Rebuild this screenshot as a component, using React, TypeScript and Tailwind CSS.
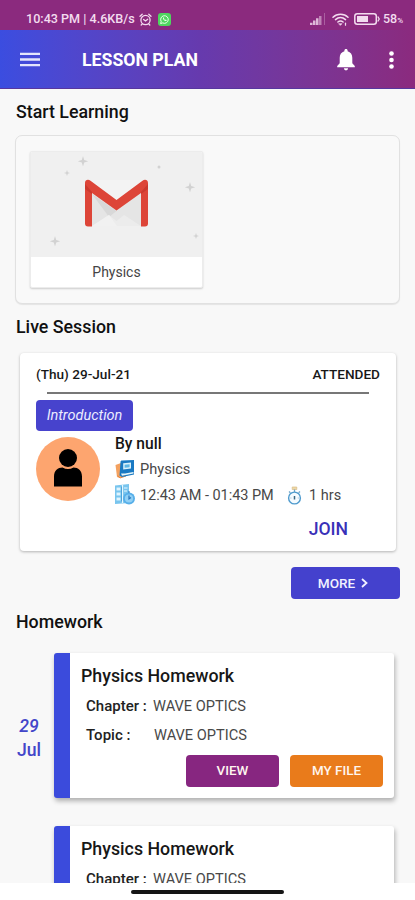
import type { ReactNode } from "react";

type HomeworkItem = {
  title: string;
  chapter: string;
  topic: string;
  // only the first item of a day carries the date label
  day?: string;
  month?: string;
};

const homework: HomeworkItem[] = [
  { title: "Physics Homework", chapter: "WAVE OPTICS", topic: "WAVE OPTICS", day: "29", month: "Jul" },
  { title: "Physics Homework", chapter: "WAVE OPTICS", topic: "WAVE OPTICS" },
];

function StatusBar() {
  return (
    <div className="flex h-[30px] shrink-0 items-center justify-between bg-[#8b2a7e] pt-[8px] pr-[11px] pl-[26px] text-[#f3dcef]">
      <div className="flex items-center">
        <span className="w-[110px] text-[12.6px] leading-none font-medium whitespace-nowrap">10:43 PM | 4.6KB/s</span>
        <svg className="ml-[3px] h-[13px] w-[13px]" viewBox="0 0 13 13" fill="none" stroke="currentColor" strokeWidth="1.3" strokeLinecap="round">
          <circle cx="6.5" cy="7" r="4.6" />
          <path d="M1 3.2 3.2 1.2M12 3.2 9.8 1.2M4.6 6.4l1.9 1.6 2.2-1.8M3.2 11l-1 1M9.8 11l1 1" />
        </svg>
        <svg className="ml-[6px] h-[13px] w-[13px]" viewBox="0 0 13 13">
          <rect width="13" height="13" rx="3" fill="#4fd660" />
          <path d="m2.6 10.6.6-2.1a3.8 3.8 0 1 1 1.5 1.4z" fill="none" stroke="#e9ffe9" strokeWidth="1" />
          <path d="M5 4.7c-.4 1.4 1.7 3.6 3.2 3.4l.6-.9-1.2-.7-.6.5-1.1-1.2.4-.6-.6-1z" fill="#e9ffe9" />
        </svg>
      </div>
      <div className="flex items-center">
        <svg className="h-[12px] w-[16px]" viewBox="0 0 16 12" fill="currentColor">
          <path d="M0 9.800h2.500V12H0zM3 7.500h2.500V12H3zM6 5.200h2.500V12H6z" opacity=".8" />
          <path d="M9 3h2.500v9H9z" opacity=".5" />
          <path d="M14 0h1v12h-1z" opacity=".3" />
        </svg>
        <svg className="ml-[6px] h-[13px] w-[17px]" viewBox="0 0 17 13" fill="none" stroke="currentColor" strokeWidth="1.500" strokeLinecap="round">
          <path d="M1 4.200c4-4 11-4 15 0M3.500 6.600c3-2.700 7-2.700 10 0M5.900 9c1.700-1.400 3.500-1.400 5.200 0" />
          <path d="M7 10.700h3l-1.500 1.500z" fill="currentColor" strokeWidth=".6" />
          <path d="M13.500 10.200v2" strokeWidth="1.200" />
        </svg>
        <svg className="ml-[5px] h-[12px] w-[26px]" viewBox="0 0 26 12" fill="none">
          <rect x=".8" y=".8" width="21.500" height="10.400" rx="2.500" stroke="currentColor" strokeWidth="1.500" />
          <rect x="3" y="3" width="11" height="6" fill="currentColor" />
          <path d="M23.800 3.500 25.200 6l-1.400 2.500" stroke="currentColor" strokeWidth="1.300" />
        </svg>
        <span className="ml-[3px] w-[21px] text-[12.5px] leading-none font-medium whitespace-nowrap">
          58<span className="text-[8px]">%</span>
        </span>
      </div>
    </div>
  );
}

function Header() {
  return (
    <header className="flex h-[59px] shrink-0 items-center bg-linear-to-r from-[#3b4de0] via-[#663aae] via-48% to-[#8b2a7e] text-white shadow-[inset_0_-1px_0_#57379e]">
      <svg className="ml-5 h-4 w-5 text-[#e4e5fc]" viewBox="0 0 20 16" fill="currentColor">
        <path d="M0 .7h20v2.400H0zM0 6.300h20v2.400H0zM0 11.900h20v2.400H0z" />
      </svg>
      <h1 className="ml-[42px] grow pt-[2px] text-[17.7px] leading-none font-bold">LESSON PLAN</h1>
      <svg className="h-[22px] w-[18px]" viewBox="0 0 18 22" fill="currentColor">
        <path d="M9 0c1 0 1.600.7 1.600 1.600v.7c3 .8 4.700 3.300 4.700 6.400v5.600L17.800 17v1.300H.2V17l2.500-2.700V8.700c0-3.100 1.700-5.600 4.700-6.400v-.7C7.400.7 8 0 9 0zM6.900 19.300h4.200a2.100 2.100 0 0 1-4.200 0z" />
      </svg>
      <svg className="mr-[21px] ml-[34px] h-[18px] w-[5px]" viewBox="0 0 5 18" fill="currentColor">
        <circle cx="2.500" cy="2.500" r="2.300" />
        <circle cx="2.500" cy="9" r="2.300" />
        <circle cx="2.500" cy="15.500" r="2.300" />
      </svg>
    </header>
  );
}

function SectionTitle({ children }: { children: ReactNode }) {
  return <h2 className="pl-4 text-[17.8px] leading-6 font-medium text-[#111]">{children}</h2>;
}

function SubjectTile() {
  return (
    <div className="h-[137px] w-[173px] overflow-hidden rounded-[2px] border border-[#ececec] bg-white shadow-[0_1px_2px_rgba(0,0,0,0.18)]">
      <svg className="block h-[105px] w-full" viewBox="0 0 171 105" preserveAspectRatio="xMinYMin slice">
        <rect width="172" height="105" fill="#f0f0f0" />
        <g fill="#d2d2d2">
          <path d="m52 4 1.200 4 4 1.200-4 1.200-1.200 4-1.200-4-4-1.200 4-1.200z" />
          <path d="m159 30 1.200 4 4 1.200-4 1.200-1.200 4-1.200-4-4-1.200 4-1.200z" />
          <path d="m24 84 1.200 4 4 1.200-4 1.200-1.200 4-1.200-4-4-1.200 4-1.200z" />
          <path d="m36 18 .8 2.200 2.200.8-2.200.8-.8 2.200-.8-2.200-2.200-.8 2.200-.8z" />
          <path d="m165 81 .8 2.200 2.200.8-2.200.8-.8 2.200-.8-2.200-2.200-.8 2.200-.8z" />
          <circle cx="128" cy="15" r="1.500" />
        </g>
        <path d="M57 30h57v44H57z" fill="#e5e5e5" />
        <path d="M58 28h55L85.500 49z" fill="#f3f3f3" />
        <path d="M61 42 85.500 59 78 65z" fill="#d8d8d8" />
        <path d="M61 74 78 63l7.500 6 7.500-6 17 11z" fill="#ececec" />
        <path d="M61 74 78 63l8 11z" fill="#f1f1f1" />
        <path d="M54 31v40.500a3 3 0 0 0 3 3h4V41l24.500 17.500L110 41v33.500h4a3 3 0 0 0 3-3V31c0-3-3-4-5.500-2.300L85.500 48 59.500 28.700C57 27 54 28 54 31z" fill="#dd4538" />
        <path d="M54 32v5l7 5v-2zM117 32v5l-7 5v-2z" fill="#bd3027" opacity=".55" />
      </svg>
      <p className="text-center text-[14px] leading-[31px] text-[#444]">Physics</p>
    </div>
  );
}

function BookIcon() {
  return (
    <svg className="h-[20px] w-[20px]" viewBox="0 0 20 20">
      <path d="M.5 6 6 4l5 13-6.500 2-2.500-1z" fill="#f4a15f" />
      <path d="M2.500 16.500 5 19l6-2" fill="none" stroke="#e58b45" strokeWidth="1" />
      <path d="M5.500 3c0-1 .6-1.500 1.500-1.500L19 1v14.500L7 18 4.500 16.500z" fill="#1979c3" />
      <path d="m8.200 4.200 7.800-.8v6.200l-7.800 1z" fill="#d9f1fb" />
      <path d="m9.600 5.700 5-.5v3l-5 .6z" fill="#5cb4e4" />
      <path d="M6 14.500c3.500.5 8-1 12.500-1.500v1.600L7 16.700z" fill="#e7f5f8" />
    </svg>
  );
}

function ScheduleIcon() {
  return (
    <svg className="h-[21px] w-[20px]" viewBox="0 0 20 21">
      <path d="M0 1.500 14 0v19L0 20z" fill="#79c5ee" />
      <path d="M1.500 3.500h4v3h-4zM1.500 8.500h4v3h-4zM1.500 13.500h4v3h-4z" fill="#d6f1fd" />
      <path d="M7.500 1v18M9 4h3.500M9 7h3M2 5h3M2 10h3M2 15h3" stroke="#e7f8ff" strokeWidth="1.200" />
      <path d="M6.500 2.500v15" stroke="#4099d3" strokeWidth=".8" />
      <circle cx="14" cy="14.500" r="6" fill="#57afe9" />
      <circle cx="14" cy="14.500" r="4.100" fill="#91d0f5" />
      <path d="M14 11.500v3.400l2-1.400M13 8h2" stroke="#2876bd" strokeWidth="1.200" fill="none" />
    </svg>
  );
}

function StopwatchIcon() {
  return (
    <svg className="h-[19px] w-[15px]" viewBox="0 0 15 19" fill="none">
      <path d="M5.200 1h4.600v2.500H5.200z" fill="#eed8a7" stroke="#d9bd88" strokeWidth=".7" />
      <path d="M7.500 3.500V6M2 5.500l1.400 1.300M13 5.500l-1.400 1.300" stroke="#6fa5c8" strokeWidth="1.300" />
      <circle cx="7.500" cy="12" r="5.900" fill="#f5fbff" stroke="#4f9bce" strokeWidth="1.400" />
      <path d="M7.500 10v3.500" stroke="#386681" strokeWidth="1.500" />
      <path d="M3.500 12h.8M10.800 12h.8" stroke="#83afc8" />
    </svg>
  );
}

function LiveSession() {
  return (
    <div className="mr-[19px] ml-5 flex h-[198px] flex-col rounded-[4px] bg-white shadow-[0_1px_3px_rgba(0,0,0,0.28)]">
      <div className="flex justify-between pt-[11px] pr-[16px] pl-4 text-[13.6px] leading-5 font-medium text-[#181818]">
        <span>(Thu) 29-Jul-21</span>
        <span>ATTENDED</span>
      </div>
      <div className="mt-[8px] mr-[27px] ml-[27px] h-[1.500px] bg-[#777]" />
      <div className="mt-[6px] ml-4 h-[31px] w-[97px] rounded-[4px] bg-[#4743cd] text-center text-[14.5px] leading-[32px] text-[#ececff] italic">
        Introduction
      </div>
      <div className="flex pl-4">
        <div className="mt-[6px] h-[64px] w-[64px] overflow-hidden rounded-full bg-[#fda56f]">
          <svg className="h-full w-full" viewBox="0 0 64 64">
            <circle cx="32" cy="21" r="9" />
            <path d="M18 49.500V39.500C18 33.500 22 30.500 26.500 30.500q5.500 3 11 0c4.500 0 8.500 3 8.500 9v10z" />
          </svg>
        </div>
        <div className="ml-[15px] grow">
          <p className="mt-[1px] text-[15.6px] leading-6 font-medium text-[#151515]">By null</p>
          <div className="flex h-[26px] items-center">
            <BookIcon />
            <span className="ml-[5px] pt-[2px] text-[14.6px] text-[#484848]">Physics</span>
          </div>
          <div className="flex h-[26px] items-center text-[14.5px] text-[#484848]">
            <ScheduleIcon />
            <span className="ml-[5px] w-[134px] pt-[2px] tracking-[-0.05px] whitespace-nowrap">12:43 AM - 01:43 PM</span>
            <span className="ml-[13px] pt-[1px]"><StopwatchIcon /></span>
            <span className="ml-[7px] pt-[2px] whitespace-nowrap">1 hrs</span>
          </div>
        </div>
      </div>
      <button className="mt-[9px] mr-[48px] self-end text-[17.6px] leading-6 font-medium text-[#3930b8]">JOIN</button>
    </div>
  );
}

function HomeworkCard({ item }: { item: HomeworkItem }) {
  return (
    <div className="mb-[28px] flex h-[145px] shrink-0">
      <div className="w-[54px] pt-[61px] text-center text-[17.6px] leading-6 font-medium text-[#4346c9]">
        {item.day && <p className="pl-[4px] italic">{item.day}</p>}
        {item.month && <p className="pl-[4px]">{item.month}</p>}
      </div>
      <div className="flex w-[340px] flex-col rounded-[3px] border-l-[16px] border-[#3b4bdc] bg-white pt-[11px] pl-[11px] shadow-[1px_3px_5px_rgba(0,0,0,0.3)]">
        <h3 className="text-[17.8px] leading-6 font-medium text-[#171717]">{item.title}</h3>
        <div className="mt-[6px] flex pl-[5px] text-[14.6px] leading-6 text-[#484848]">
          <span className="w-[67px] text-[15px] font-medium text-[#222]">Chapter :</span>
          <span>{item.chapter}</span>
        </div>
        <div className="mt-[5px] flex pl-[5px] text-[14.6px] leading-6 text-[#484848]">
          <span className="w-[68px] text-[15px] font-medium text-[#222]">Topic :</span>
          <span>{item.topic}</span>
        </div>
        <div className="mt-[8px] flex justify-end gap-[11px] pr-[11px] text-[13.4px] font-medium text-[#fff5ef]">
          <button className="h-8 w-[93px] rounded-[4px] bg-[#872680] pt-[1px]">VIEW</button>
          <button className="h-8 w-[93px] rounded-[4px] bg-[#e97b1b] pt-[1px]">MY FILE</button>
        </div>
      </div>
    </div>
  );
}

export default function App() {
  return (
    <div className="flex h-[900px] w-[415px] flex-col overflow-hidden bg-[#f8f8f8] font-['Roboto',sans-serif]">
      <StatusBar />
      <Header />
      <main className="flex h-[794px] shrink-0 flex-col overflow-hidden pt-[11px]">
        <SectionTitle>Start Learning</SectionTitle>
        <section className="mt-[11px] mr-[15px] ml-[15px] h-[169px] shrink-0 rounded-[7px] border border-[#e1e1e1] bg-[#f9f9f9] pt-[15px] pl-[14px] shadow-[0_1px_1px_rgba(0,0,0,0.08)]">
          <SubjectTile />
        </section>
        <div className="mt-[11px]">
          <SectionTitle>Live Session</SectionTitle>
        </div>
        <section className="mt-[14px]">
          <LiveSession />
        </section>
        <button className="mt-[16px] mr-[15px] flex h-8 w-[109px] shrink-0 items-center justify-center self-end rounded-[4px] bg-[#4441cd] pr-[5px] text-[13.6px] font-medium text-[#f1f1ff]">
          MORE
          <svg className="ml-[6px] h-[10px] w-[7px]" viewBox="0 0 7 10" fill="none" stroke="currentColor" strokeWidth="1.800">
            <path d="m1 1 4.500 4L1 9" />
          </svg>
        </button>
        <div className="mt-[11px] mb-[19px]">
          <SectionTitle>Homework</SectionTitle>
        </div>
        {homework.map((item, i) => (
          <HomeworkCard key={i} item={item} />
        ))}
      </main>
      <footer className="flex h-[17px] shrink-0 justify-center bg-white pt-[7px]">
        <div className="h-[4px] w-[153px] rounded-full bg-[#151515]" />
      </footer>
    </div>
  );
}
